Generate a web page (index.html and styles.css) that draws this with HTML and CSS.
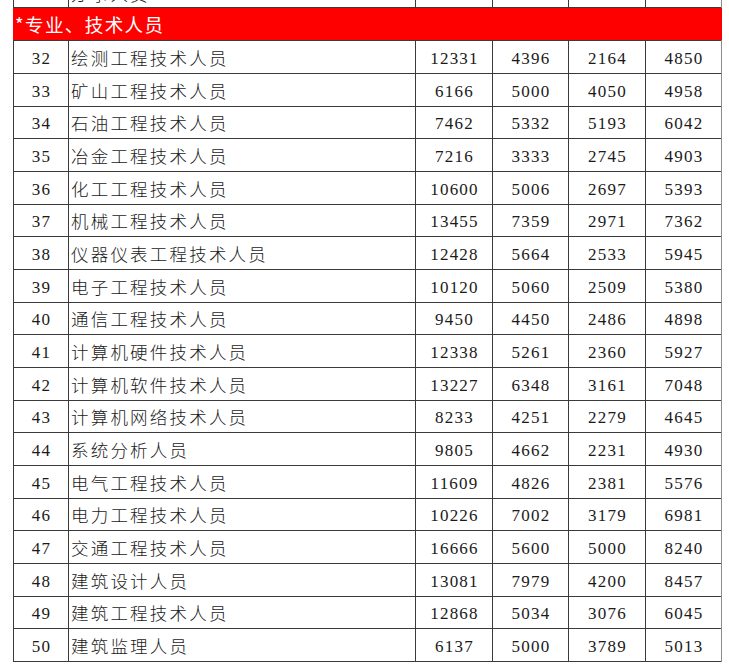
FILE: index.html
```html
<!DOCTYPE html>
<html lang="zh-CN">
<head>
<meta charset="utf-8">
<title>专业、技术人员</title>
<link rel="stylesheet" href="styles.css">
</head>
<body>
<div class="page">
  <div class="sheet">
    <div class="row partial"><div class="c no"></div><div class="c name">办事人员</div><div class="c num"></div><div class="c num"></div><div class="c num"></div><div class="c num"></div></div>
    <div class="band">*专业、技术人员</div>
    <div class="row"><div class="c no">32</div><div class="c name">绘测工程技术人员</div><div class="c num">12331</div><div class="c num">4396</div><div class="c num">2164</div><div class="c num">4850</div></div>
    <div class="row"><div class="c no">33</div><div class="c name">矿山工程技术人员</div><div class="c num">6166</div><div class="c num">5000</div><div class="c num">4050</div><div class="c num">4958</div></div>
    <div class="row"><div class="c no">34</div><div class="c name">石油工程技术人员</div><div class="c num">7462</div><div class="c num">5332</div><div class="c num">5193</div><div class="c num">6042</div></div>
    <div class="row"><div class="c no">35</div><div class="c name">冶金工程技术人员</div><div class="c num">7216</div><div class="c num">3333</div><div class="c num">2745</div><div class="c num">4903</div></div>
    <div class="row"><div class="c no">36</div><div class="c name">化工工程技术人员</div><div class="c num">10600</div><div class="c num">5006</div><div class="c num">2697</div><div class="c num">5393</div></div>
    <div class="row"><div class="c no">37</div><div class="c name">机械工程技术人员</div><div class="c num">13455</div><div class="c num">7359</div><div class="c num">2971</div><div class="c num">7362</div></div>
    <div class="row"><div class="c no">38</div><div class="c name">仪器仪表工程技术人员</div><div class="c num">12428</div><div class="c num">5664</div><div class="c num">2533</div><div class="c num">5945</div></div>
    <div class="row"><div class="c no">39</div><div class="c name">电子工程技术人员</div><div class="c num">10120</div><div class="c num">5060</div><div class="c num">2509</div><div class="c num">5380</div></div>
    <div class="row"><div class="c no">40</div><div class="c name">通信工程技术人员</div><div class="c num">9450</div><div class="c num">4450</div><div class="c num">2486</div><div class="c num">4898</div></div>
    <div class="row"><div class="c no">41</div><div class="c name">计算机硬件技术人员</div><div class="c num">12338</div><div class="c num">5261</div><div class="c num">2360</div><div class="c num">5927</div></div>
    <div class="row"><div class="c no">42</div><div class="c name">计算机软件技术人员</div><div class="c num">13227</div><div class="c num">6348</div><div class="c num">3161</div><div class="c num">7048</div></div>
    <div class="row"><div class="c no">43</div><div class="c name">计算机网络技术人员</div><div class="c num">8233</div><div class="c num">4251</div><div class="c num">2279</div><div class="c num">4645</div></div>
    <div class="row"><div class="c no">44</div><div class="c name">系统分析人员</div><div class="c num">9805</div><div class="c num">4662</div><div class="c num">2231</div><div class="c num">4930</div></div>
    <div class="row"><div class="c no">45</div><div class="c name">电气工程技术人员</div><div class="c num">11609</div><div class="c num">4826</div><div class="c num">2381</div><div class="c num">5576</div></div>
    <div class="row"><div class="c no">46</div><div class="c name">电力工程技术人员</div><div class="c num">10226</div><div class="c num">7002</div><div class="c num">3179</div><div class="c num">6981</div></div>
    <div class="row"><div class="c no">47</div><div class="c name">交通工程技术人员</div><div class="c num">16666</div><div class="c num">5600</div><div class="c num">5000</div><div class="c num">8240</div></div>
    <div class="row"><div class="c no">48</div><div class="c name">建筑设计人员</div><div class="c num">13081</div><div class="c num">7979</div><div class="c num">4200</div><div class="c num">8457</div></div>
    <div class="row"><div class="c no">49</div><div class="c name">建筑工程技术人员</div><div class="c num">12868</div><div class="c num">5034</div><div class="c num">3076</div><div class="c num">6045</div></div>
    <div class="row"><div class="c no">50</div><div class="c name">建筑监理人员</div><div class="c num">6137</div><div class="c num">5000</div><div class="c num">3789</div><div class="c num">5013</div></div>
  </div>
</div>
</body>
</html>
```
FILE: styles.css
```css
html, body {
  margin: 0;
  padding: 0;
  background: #ffffff;
}

.page {
  height: 671px;
  overflow: hidden;
}

.sheet {
  margin: -26px 0 0 13px;
  width: 707px;
  background: #3a3a3a;
  padding: 1px 0 1px 1px;
  border-right: 1px solid #8c8c8c;
  display: flex;
  flex-direction: column;
  gap: 1px;
}

.row {
  display: grid;
  grid-template-columns: 54px 346px 76px 75px 76px 75px;
  gap: 1px;
  height: 32px;
}

.row:nth-child(3n+5) {
  height: 31px;
}

.c {
  background: #ffffff;
  display: flex;
  align-items: center;
  color: #1a1a1a;
  overflow: hidden;
}

.no,
.num {
  justify-content: center;
  font-family: "Liberation Serif", "DejaVu Serif", serif;
  font-size: 17px;
  letter-spacing: 1.2px;
  padding-top: 3px;
  padding-left: 1px;
}

.name {
  padding-left: 2px;
  font-family: "Noto Sans CJK SC", "Noto Sans", sans-serif;
  font-weight: 300;
  font-size: 17.5px;
  letter-spacing: 2.2px;
}

.partial .name {
  padding-top: 4px;
}

.band {
  height: 32px;
  margin: 0 -1px;
  background: #ff0000;
  color: #ffffff;
  display: flex;
  align-items: center;
  padding-left: 2px;
  font-family: "Noto Sans CJK SC", "Noto Sans", sans-serif;
  font-size: 18.5px;
  letter-spacing: 1.4px;
}
```
